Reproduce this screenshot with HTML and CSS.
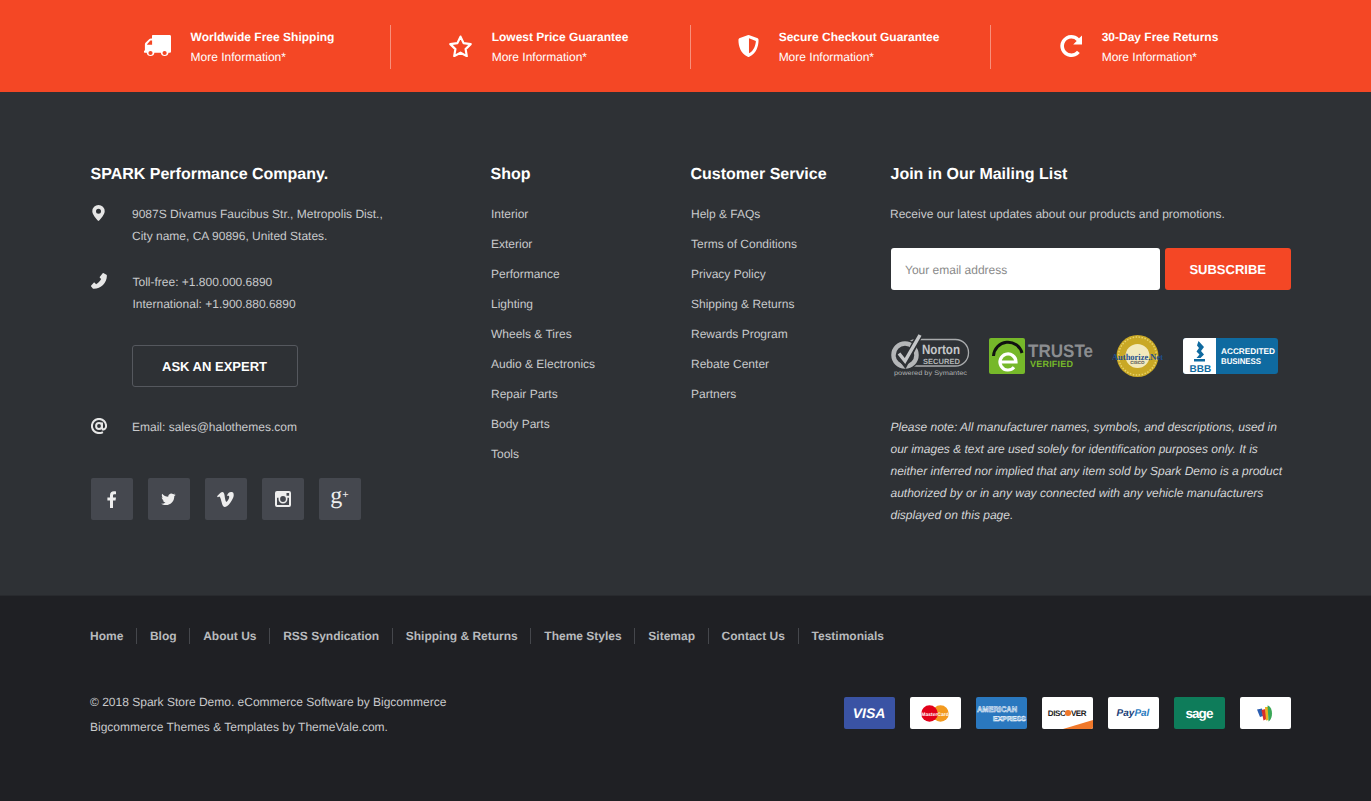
FILE: index.html
```html
<!DOCTYPE html>
<html lang="en">
<head>
<meta charset="utf-8">
<title>Spark Store Footer</title>
<link rel="stylesheet" href="styles.css">
</head>
<body>
<section class="benefits">
  <div class="wrap benefits-row">
    <div class="benefit">
      <svg class="ben-icon" width="27" height="22" viewBox="0 0 27 22"><path fill="#fff" fill-rule="evenodd" d="M9 0h16.600c.8 0 1.400.6 1.400 1.400V16.500c0 .8-.6 1.300-1.400 1.300h-1.100a3.900 3.900 0 0 1-7.700 0H10.400a3.900 3.900 0 0 1-7.700 0H.9c-.5 0-.9-.4-.9-.9v-1.100l.9-.3V9.200c0-.6.200-1 .6-1.400L5.400 4c.4-.4.900-.6 1.400-.6h1.200V1c0-.6.400-1 1-1zM3.100 9.800h5V5.400H6.900c-.2 0-.4.100-.5.200L3.300 8.900c-.1.100-.2.300-.2.500zM6.500 15.900a2.100 2.100 0 1 0 0 4.200 2.100 2.100 0 0 0 0-4.200zM20.600 15.900a2.100 2.100 0 1 0 0 4.200 2.100 2.100 0 0 0 0-4.200z"/></svg>
      <div class="ben-text"><strong>Worldwide Free Shipping</strong><span>More Information*</span></div>
    </div>
    <div class="benefit">
      <svg class="ben-icon" width="23" height="22" viewBox="0 0 23 22"><path fill="none" stroke="#fff" stroke-width="2.200" stroke-linejoin="round" d="M11.500 1.600l3.100 6.500 7.100 1-5.100 5 1.200 7-6.300-3.400-6.300 3.400 1.200-7-5.100-5 7.100-1z"/></svg>
      <div class="ben-text"><strong>Lowest Price Guarantee</strong><span>More Information*</span></div>
    </div>
    <div class="benefit">
      <svg class="ben-icon" width="21" height="22" viewBox="0 0 21 23"><path fill="#fff" fill-rule="evenodd" d="M10.500 0l1 .3 8 2.900c.9.300 1.500 1 1.500 1.900 0 5.800-1.900 13.900-9.700 17.600-.5.300-1.100.3-1.600 0C1.900 19 0 10.900 0 5.100c0-.9.600-1.600 1.500-1.900l8-2.900zm.5 3.500v15.700c5.300-3 7-8.500 7.200-13z"/></svg>
      <div class="ben-text"><strong>Secure Checkout Guarantee</strong><span>More Information*</span></div>
    </div>
    <div class="benefit">
      <svg class="ben-icon" width="22" height="22" viewBox="0 0 22 22"><path fill="#fff" d="M22 .6v8.800H13.200l3.500-3.500A7.400 7.400 0 0 0 11.200 3.600 7.400 7.400 0 1 0 17 15.800l2.800 2.200A11 11 0 1 1 11.200 0c3 0 5.800 1.200 7.800 3.200z"/></svg>
      <div class="ben-text"><strong>30-Day Free Returns</strong><span>More Information*</span></div>
    </div>
  </div>
</section>

<footer class="main">
  <div class="wrap main-grid">
    <div class="col-contact">
      <h3>SPARK Performance Company.</h3>
      <div class="contact-row">
        <span class="c-icon"><svg width="13" height="16" viewBox="0 0 13 16"><path fill="#e6e6e6" fill-rule="evenodd" d="M6.500 0A6.200 6.200 0 0 1 12.700 6.200C12.700 9 9 14 6.500 16 4 14 .3 9 .3 6.200A6.200 6.200 0 0 1 6.500 0zm0 3.700a2.500 2.500 0 1 0 0 5 2.500 2.500 0 0 0 0-5z"/></svg></span>
        <p>9087S Divamus Faucibus Str., Metropolis Dist.,<br>City name, CA 90896, United States.</p>
      </div>
      <div class="contact-row phone">
        <span class="c-icon"><svg width="16" height="16" viewBox="0 0 16 16"><path fill="#e6e6e6" d="M15.900 2.800c0 7-6 13-13 13-.4 0-.8-.1-1.100-.3L.2 13.600c-.3-.3-.3-.7 0-1l2.500-2.800c.3-.3.700-.3 1 0l1.400 1.400c1.800-.8 4.200-3.300 5-5.100L8.900 4.700c-.3-.3-.3-.7 0-1L11.700.3c.3-.3.700-.3 1 0L15.500 1.700c.3.300.4.700.4 1.100z"/></svg></span>
        <p>Toll-free: +1.800.000.6890<br>International: +1.900.880.6890</p>
      </div>
      <a class="btn-outline" href="#">ASK AN EXPERT</a>
      <div class="contact-row email">
        <span class="c-icon"><svg width="16" height="16" viewBox="0 0 16 16"><path fill="none" stroke="#e6e6e6" stroke-width="2" d="M11.100 11.300c2.300.8 4-1 4-3.300A7.100 7.100 0 1 0 8 15.100c1.500 0 2.700-.3 3.900-1"/><circle cx="8" cy="8" r="2.900" fill="none" stroke="#e6e6e6" stroke-width="2"/><path fill="none" stroke="#e6e6e6" stroke-width="2" d="M11 4.500v5c0 1.200.7 1.700 1.500 1.700"/></svg></span>
        <p>Email: sales@halothemes.com</p>
      </div>
      <div class="social">
        <a href="#"><svg width="9" height="17" viewBox="0 0 9 17"><path fill="#eee" d="M6 17V9.500h2.500L9 6.500H6V4.700c0-.9.300-1.500 1.500-1.500H9V.4C8.700.3 7.900.2 6.900.2 4.600.2 3 1.600 3 4.200v2.300H.4v3H3V17z"/></svg></a>
        <a href="#"><svg width="15" height="13" viewBox="0 0 16 14"><path fill="#eee" d="M15.500 1.800c-.6.300-1.200.4-1.800.5.600-.4 1.100-1 1.400-1.700-.6.400-1.300.6-2 .8A3.200 3.200 0 0 0 7.700 3.300c0 .2 0 .5.100.7C5.200 3.900 2.800 2.600 1.200.700.400 2.100.800 4 2.200 5 1.700 5 1.200 4.800.700 4.600c0 1.600 1.100 3 2.600 3.300-.5.100-1 .1-1.500 0 .4 1.300 1.600 2.200 3 2.300-1.400 1.100-3.100 1.500-4.800 1.300 1.400.9 3.100 1.500 5 1.500 6 0 9.400-5 9.200-9.600.6-.4 1.200-1 1.600-1.600z"/></svg></a>
        <a href="#"><svg width="17" height="15" viewBox="0 0 17 14" preserveAspectRatio="none"><path fill="#eee" d="M16.700 3.300c-.1 1.600-1.200 3.900-3.400 6.700-2.200 2.900-4.100 4-5.600 4-1 0-1.800-.9-2.500-2.600L3.800 6.700C3.300 5 2.800 4.100 2.200 4.100c-.1 0-.6.300-1.300.8L0 3.900C.8 3.200 1.700 2.400 2.500 1.700 3.600.7 4.500.2 5.100.1c1.300-.1 2.100.8 2.400 2.700.3 2.100.6 3.300.7 3.900.4 1.700.8 2.500 1.300 2.500.4 0 .9-.6 1.600-1.700.7-1.100 1.100-2 1.100-2.600.1-1-.3-1.500-1.100-1.500-.4 0-.8.100-1.200.3C10.700 1.200 12.300-.1 14.600 0c1.700 0 2.200 1.100 2.100 3.300z"/></svg></a>
        <a href="#"><svg width="16" height="16" viewBox="0 0 16 16"><path fill="#eee" fill-rule="evenodd" d="M2 0h12a2 2 0 0 1 2 2v12a2 2 0 0 1-2 2H2a2 2 0 0 1-2-2V2a2 2 0 0 1 2-2zm9.500 2v2.800h2.600V2zM2 6.700V14h12V6.700h-1.700c.1.400.2.800.2 1.300a4.500 4.500 0 0 1-9 0c0-.5.100-.9.200-1.300zM8 5.100a2.900 2.900 0 1 0 0 5.800 2.900 2.900 0 0 0 0-5.800z"/></svg></a>
        <a href="#" class="gplus">g<sup>+</sup></a>
      </div>
    </div>

    <div class="col-links">
      <h3>Shop</h3>
      <ul>
        <li><a href="#">Interior</a></li>
        <li><a href="#">Exterior</a></li>
        <li><a href="#">Performance</a></li>
        <li><a href="#">Lighting</a></li>
        <li><a href="#">Wheels &amp; Tires</a></li>
        <li><a href="#">Audio &amp; Electronics</a></li>
        <li><a href="#">Repair Parts</a></li>
        <li><a href="#">Body Parts</a></li>
        <li><a href="#">Tools</a></li>
      </ul>
    </div>

    <div class="col-links">
      <h3>Customer Service</h3>
      <ul>
        <li><a href="#">Help &amp; FAQs</a></li>
        <li><a href="#">Terms of Conditions</a></li>
        <li><a href="#">Privacy Policy</a></li>
        <li><a href="#">Shipping &amp; Returns</a></li>
        <li><a href="#">Rewards Program</a></li>
        <li><a href="#">Rebate Center</a></li>
        <li><a href="#">Partners</a></li>
      </ul>
    </div>

    <div class="col-news">
      <h3>Join in Our Mailing List</h3>
      <p class="news-lead">Receive our latest updates about our products and promotions.</p>
      <form class="news-form">
        <input type="email" placeholder="Your email address">
        <button type="button">SUBSCRIBE</button>
      </form>
      <div class="trust">
        <svg class="t-norton" width="80" height="44" viewBox="0 0 80 44">
          <rect x="13" y="5.500" width="64.500" height="26.500" rx="13" fill="none" stroke="#a9abad" stroke-width="1.300"/>
          <circle cx="14" cy="21" r="15" fill="#2e3135"/>
          <circle cx="14" cy="21" r="11.500" fill="none" stroke="#b4b6b8" stroke-width="4.500"/>
          <path d="M7 20l7 9L28 2" fill="none" stroke="#2e3135" stroke-width="6.500"/>
          <path d="M8 19.500l6 7.500L29 1" fill="none" stroke="#c4c6c8" stroke-width="3.500"/>
          <text x="31" y="20" class="n1" textLength="38" lengthAdjust="spacingAndGlyphs">Norton</text>
          <text x="32" y="29.500" class="n2" textLength="37">SECURED</text>
          <text x="3" y="41" class="n3" textLength="73" lengthAdjust="spacingAndGlyphs">powered by Symantec</text>
        </svg>
        <svg class="t-truste" width="109" height="37" viewBox="0 0 109 37">
          <rect x="0" y="0" width="36" height="36" rx="2" fill="#76b82a"/>
          <path d="M4.500 18A14.500 14.500 0 0 1 33 15" fill="none" stroke="#111" stroke-width="3"/>
          <path d="M11 24h16A8 8 0 1 0 25 29.300" fill="none" stroke="#fff" stroke-width="3.200"/>
          <text x="39" y="19" class="tr1" textLength="65" lengthAdjust="spacingAndGlyphs">TRUSTe</text>
          <text x="41" y="29" class="tr2" textLength="43">VERIFIED</text>
        </svg>
        <svg class="t-auth" width="56" height="42" viewBox="0 0 56 42">
          <circle cx="25.500" cy="21" r="21" fill="#c9a825"/>
          <circle cx="25.500" cy="21" r="19" fill="none" stroke="#e8d26a" stroke-width="1.500" stroke-dasharray="1.500 1.500"/>
          <circle cx="25.500" cy="21" r="12" fill="#f2e9bc"/>
          <text x="25.500" y="29" class="au2">CISCO</text>
          <text x="0" y="24.500" class="au" textLength="51" lengthAdjust="spacingAndGlyphs">Authorize.Net</text>
        </svg>
        <svg class="t-bbb" width="95" height="36" viewBox="0 0 95 36">
          <rect width="95" height="36" rx="3" fill="#0f6aa0"/>
          <path d="M3 0h30v36H3a3 3 0 0 1-3-3V3a3 3 0 0 1 3-3z" fill="#fff"/>
          <path d="M15.500 3l5.500 6-3 4 3 3.500-3.500 3.500h-4l3-3.500-3-3 2.500-3.500-2-2.500z" fill="#0f6aa0"/>
          <path d="M11 21h11v2.500H11z" fill="#0f6aa0"/>
          <text x="6.500" y="33.500" class="bb">BBB</text>
          <text x="38" y="16" class="bb2" textLength="54" lengthAdjust="spacingAndGlyphs">ACCREDITED</text>
          <text x="38" y="26" class="bb2" textLength="40" lengthAdjust="spacingAndGlyphs">BUSINESS</text>
        </svg>
      </div>
      <p class="note">Please note: All manufacturer names, symbols, and descriptions, used in our images &amp; text are used solely for identification purposes only. It is neither inferred nor implied that any item sold by Spark Demo is a product authorized by or in any way connected with any vehicle manufacturers displayed on this page.</p>
    </div>
  </div>
</footer>

<section class="bottom">
  <div class="wrap">
    <nav class="bottom-nav">
      <a href="#">Home</a><a href="#">Blog</a><a href="#">About Us</a><a href="#">RSS Syndication</a><a href="#">Shipping &amp; Returns</a><a href="#">Theme Styles</a><a href="#">Sitemap</a><a href="#">Contact Us</a><a href="#">Testimonials</a>
    </nav>
    <div class="bottom-row">
      <p class="copy">© 2018 Spark Store Demo. eCommerce Software by Bigcommerce<br>Bigcommerce Themes &amp; Templates by ThemeVale.com.</p>
      <div class="pay">
        <span class="card visa">VISA</span>
        <span class="card"><svg width="28" height="17" viewBox="0 0 28 17"><circle cx="19.500" cy="8.500" r="8.300" fill="#f39a1f"/><circle cx="8.500" cy="8.500" r="8.300" fill="#e2001a"/><text x="14" y="10.500" class="mc">MasterCard</text></svg></span>
        <span class="card amex"><svg width="51" height="32" viewBox="0 0 51 32"><text x="1" y="15" class="am" textLength="40" lengthAdjust="spacingAndGlyphs">AMERICAN</text><text x="17" y="23.500" class="am am2" textLength="33" lengthAdjust="spacingAndGlyphs">EXPRESS</text></svg></span>
        <span class="card disc"><span class="disc-t">DISC<i></i>VER</span></span>
        <span class="card paypal"><b>Pay</b><b class="pal">Pal</b></span>
        <span class="card sage">sage</span>
        <span class="card"><svg width="16" height="17" viewBox="0 0 16 17"><path d="M0 4.500L5 3.500 6 11 3 12z" fill="#2a5db0"/><path d="M4.500 5L8.500 4 9.500 14 6.500 15.500z" fill="#d9302c"/><path d="M8 2L11 2 11.500 15 9 15.500z" fill="#e9b21e"/><path d="M10.500 .5C13 1 15 4 15 8.500 15 12 13.500 15.500 11.500 16.500z" fill="#3aa757"/></svg></span>
      </div>
    </div>
  </div>
</section>
</body>
</html>
```
FILE: styles.css
```css
* { box-sizing: border-box; }
html, body { margin: 0; padding: 0; }
body {
  font-family: "Liberation Sans", Arial, sans-serif;
  font-size: 12px;
  color: #c9cacc;
  background: #1f2024;
  text-rendering: geometricPrecision;
}
a { color: inherit; text-decoration: none; }
p { margin: 0; }
ul { list-style: none; margin: 0; padding: 0; }
.wrap { width: 1200px; margin-left: 90.5px; }

/* benefits */
.benefits { background: #f44725; height: 92px; color: #fff; }
.benefits-row { display: flex; height: 92px; align-items: center; padding-top: 2px; }
.benefit {
  width: 300px;
  height: 44px;
  display: flex;
  align-items: center;
  justify-content: center;
  gap: 20px;
  padding-right: 3px;
  border-right: 1px solid rgba(255, 255, 255, .4);
}
.benefit:first-child { padding-right: 2px; }
.benefit:last-child { border-right: 0; }
.ben-icon { flex: none; margin-bottom: 2px; }
.ben-text { display: flex; flex-direction: column; line-height: 20px; }
.ben-text strong { font-weight: 700; }

/* main */
.main { background: #2e3135; height: 504px; border-bottom: 1px solid #282a2e; padding-top: 74px; }
.main-grid { display: grid; grid-template-columns: 400px 200px 200px 400px; }
h3 { margin: 0; font-size: 16px; font-weight: 700; color: #fff; line-height: 18px; }
.contact-row { display: flex; margin-top: 19px; line-height: 22px; }
.c-icon { width: 41.500px; flex: none; display: flex; padding: 2px 0 0 1px; }
.contact-row.phone { margin-top: 24px; }
.contact-row.phone .c-icon { width: 42px; padding-left: 0; }
.contact-row.email { margin-top: 29px; }
.contact-row.email .c-icon { padding-left: 0; }
.btn-outline {
  display: flex;
  align-items: center;
  justify-content: center;
  width: 166px;
  height: 42px;
  margin: 30px 0 0 41px;
  border: 1px solid #55585e;
  border-radius: 3px;
  color: #fff;
  font-weight: 700;
  font-size: 13px;
}
.social { display: flex; gap: 15px; margin-top: 40px; }
.social a {
  width: 42px;
  height: 42px;
  background: #45484f;
  border-radius: 2px;
  display: flex;
  align-items: center;
  justify-content: center;
  color: #eee;
}
.social .gplus { font-family: "Liberation Serif", serif; font-size: 24px; line-height: 1; padding-bottom: 6px; }
.gplus sup { font-size: 11px; font-family: "Liberation Sans", sans-serif; margin-top: -2px; line-height: 1; }

.col-links ul { margin-top: 15px; padding-left: .5px; }
.col-links li { line-height: 30px; }

.news-lead { margin: 19px 0 0 -.5px; line-height: 22px; }
.news-form { display: flex; gap: 5px; margin-top: 23px; }
.news-form input {
  width: 270px;
  height: 42px;
  border: 0;
  border-radius: 3px;
  background: #fff;
  padding: 1px 14.500px 0;
  font: 12px "Liberation Sans", Arial, sans-serif;
  text-rendering: geometricPrecision;
}
.news-form input::placeholder { color: #8a8a8a; opacity: 1; }
.news-form button {
  width: 126px;
  height: 42px;
  border: 0;
  border-radius: 3px;
  background: #f44725;
  color: #fff;
  font: 700 13px "Liberation Sans", Arial, sans-serif;
  text-rendering: geometricPrecision;
}
.trust { display: flex; align-items: center; margin-top: 44px; height: 44px; }
.t-truste { margin-left: 18px; }
.t-auth { margin-left: 14px; }
.t-bbb { margin-left: 15px; }
.n1 { font: 700 13.500px "Liberation Sans", sans-serif; fill: #c4c6c8; }
.n2 { font: 700 7.500px "Liberation Sans", sans-serif; fill: #b4b6b8; }
.n3 { font: 400 6.500px "Liberation Sans", sans-serif; fill: #b0b2b4; }
.tr1 { font: 700 18px "Liberation Sans", sans-serif; fill: #8b8d90; }
.tr2 { font: 700 9px "Liberation Sans", sans-serif; fill: #76b82a; }
.au { font: 700 9px "Liberation Serif", serif; fill: #1f4f8f; }
.au2 { font: 700 4.500px "Liberation Sans", sans-serif; fill: #555; text-anchor: middle; }
.bb { font: 700 10px "Liberation Sans", sans-serif; fill: #0f6aa0; }
.bb2 { font: 700 8.200px "Liberation Sans", sans-serif; fill: #fff; }
.note { margin-top: 38px; font-style: italic; line-height: 22px; color: #d4d5d7; }

/* bottom */
.bottom { height: 205px; padding-top: 32px; background: #1f2024; }
.bottom .wrap { width: 1200.500px; margin-left: 90px; }
.bottom-nav { display: flex; height: 16px; align-items: center; font-weight: 700; color: #b8babd; }
.bottom-nav a { padding: 0 12.600px 0 13px; border-left: 1px solid #45474c; line-height: 16px; }
.bottom-nav a:first-child { padding-left: 0; border-left: 0; }
.bottom-row { display: flex; justify-content: space-between; margin-top: 45px; }
.copy { line-height: 25px; margin-top: 1px; }
.pay { display: flex; gap: 15px; margin-top: 8px; }
.card {
  width: 51px;
  height: 32px;
  background: #fff;
  border-radius: 2px;
  display: flex;
  align-items: center;
  justify-content: center;
  position: relative;
  overflow: hidden;
}
.visa { background: #3a53a4; color: #fff; font-weight: 700; font-style: italic; font-size: 14px; }
.mc { font: 700 5px "Liberation Sans", sans-serif; fill: #fff; text-anchor: middle; }
.amex { background: #2a78bf; }
.am { font: 700 8px "Liberation Sans", sans-serif; fill: #2a78bf; stroke: #fff; stroke-width: .5px; }
.am2 { font-size: 7px; }
.disc::after {
  content: "";
  position: absolute;
  right: 0;
  bottom: 0;
  border-style: solid;
  border-width: 0 0 9px 30px;
  border-color: transparent transparent #f0782a transparent;
}
.disc-t { font-size: 8px; font-weight: 700; color: #222; letter-spacing: -.4px; }
.disc-t i { display: inline-block; width: 5.500px; height: 5.500px; border-radius: 50%; background: #f0782a; }
.paypal { font-size: 10px; font-style: italic; color: #1b3f7a; }
.paypal .pal { color: #2b7bbf; }
.sage { background: #0e7c5a; color: #fff; font-size: 13.500px; font-weight: 700; letter-spacing: -.9px; }
```
